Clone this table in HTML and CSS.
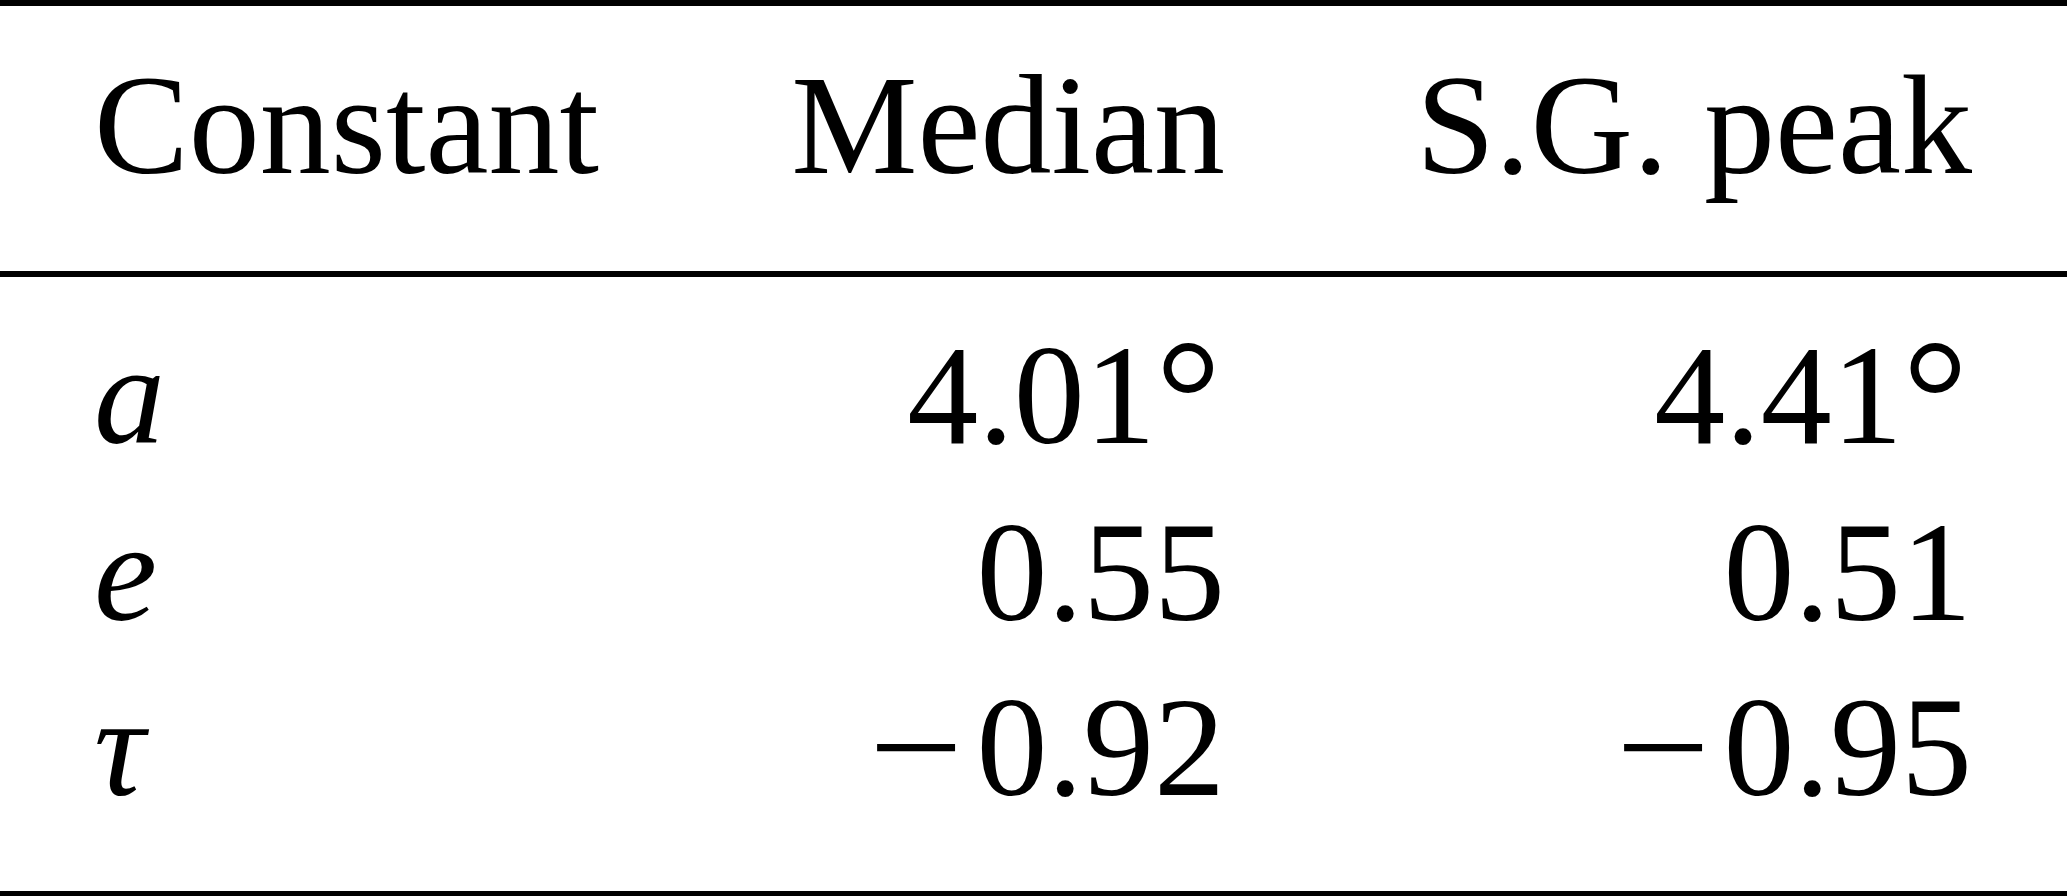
FILE: index.html
```html
<!DOCTYPE html>
<html lang="en">
<head>
<meta charset="utf-8">
<title>Constants</title>
<link rel="stylesheet" href="styles.css">
</head>
<body>
<main class="table">
  <div class="grid head">
    <div class="cell label">Constant</div>
    <div class="cell num">Median</div>
    <div class="cell num">S.G. peak</div>
  </div>
  <div class="body">
    <div class="grid row">
      <div class="cell label var">a</div>
      <div class="cell num">4.01<span class="deg">°</span></div>
      <div class="cell num">4.41<span class="deg">°</span></div>
    </div>
    <div class="grid row">
      <div class="cell label var">e</div>
      <div class="cell num">0.55</div>
      <div class="cell num">0.51</div>
    </div>
    <div class="grid row">
      <div class="cell label var">τ</div>
      <div class="cell num"><span class="minus">−</span>0.92</div>
      <div class="cell num"><span class="minus">−</span>0.95</div>
    </div>
  </div>
</main>
</body>
</html>
```

FILE: styles.css
```css
html, body {
  margin: 0;
  padding: 0;
  background: #ffffff;
}

.table {
  font-family: "Liberation Serif", "Times New Roman", serif;
  font-size: 142px;
  line-height: 175px;
  color: #000000;
  border-top: 6px solid #000000;
}

.grid {
  display: grid;
  grid-template-columns: minmax(0, 1fr) 747px 747px;
  padding: 0 95px 0 94px;
}

.head {
  padding-top: 32px;
  padding-bottom: 58px;
  border-bottom: 6px solid #000000;
}

.body {
  padding: 31px 0 56px;
  border-bottom: 6px solid #000000;
}

.cell {
  white-space: nowrap;
}

.num {
  text-align: right;
}

.var {
  font-style: italic;
}

.deg {
  font-size: 163px;
  vertical-align: -9px;
  margin-right: 4px;
}

.minus {
  display: inline-block;
  transform: scaleX(1.18);
  margin-right: 20px;
}
```
